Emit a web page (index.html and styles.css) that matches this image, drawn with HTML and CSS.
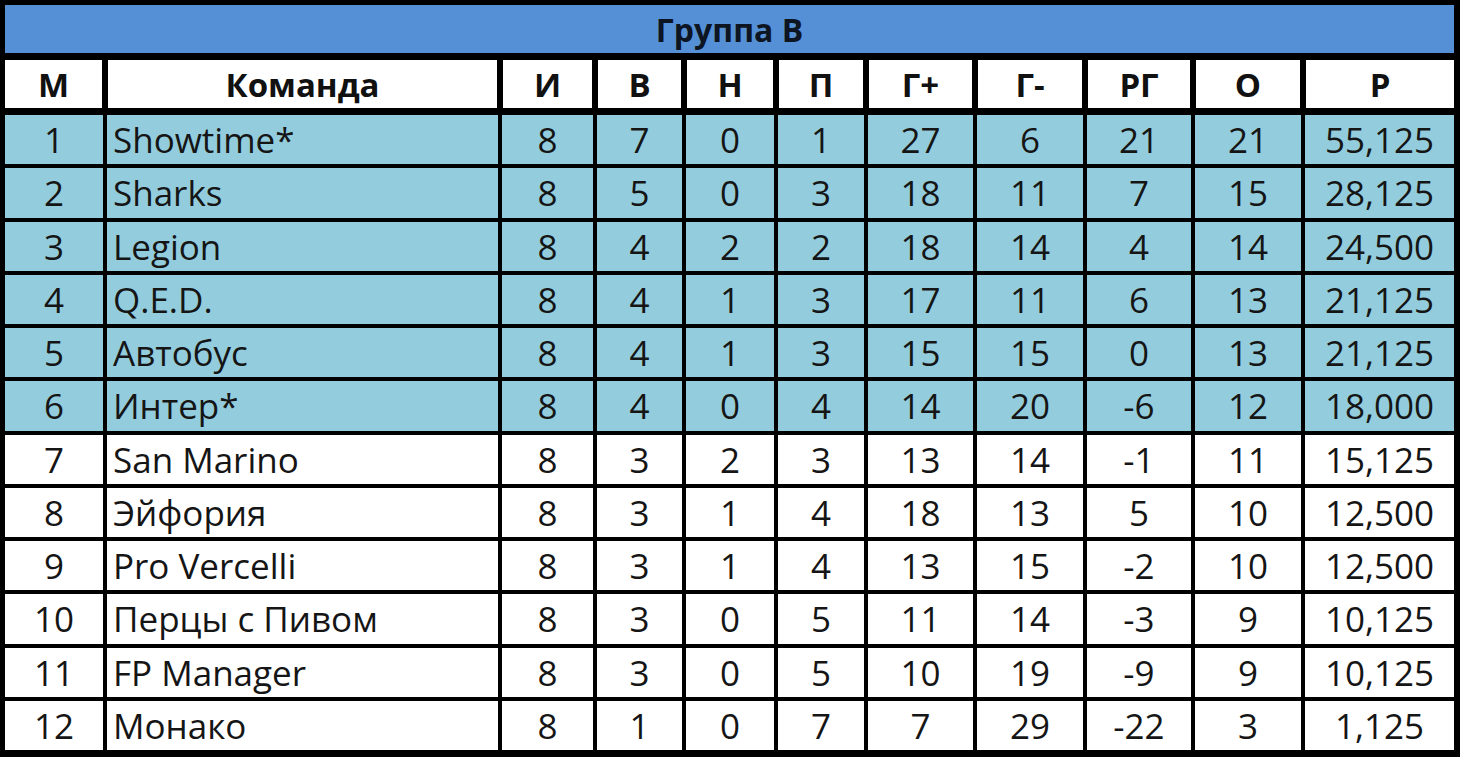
FILE: index.html
```html
<!DOCTYPE html>
<html lang="ru">
<head>
<meta charset="utf-8">
<title>Группа В</title>
<link rel="stylesheet" href="styles.css">
</head>
<body>
<div class="sheet">
  <div class="title">Группа В</div>
  <div class="grid">
    <div class="hd first">М</div>
    <div class="hd">Команда</div>
    <div class="hd">И</div>
    <div class="hd">В</div>
    <div class="hd">Н</div>
    <div class="hd">П</div>
    <div class="hd">Г+</div>
    <div class="hd">Г-</div>
    <div class="hd">РГ</div>
    <div class="hd">О</div>
    <div class="hd last">Р</div>

    <div class="c q">1</div><div class="c q team">Showtime*</div><div class="c q">8</div><div class="c q">7</div><div class="c q">0</div><div class="c q">1</div><div class="c q">27</div><div class="c q">6</div><div class="c q">21</div><div class="c q">21</div><div class="c q">55,125</div>
    <div class="c q">2</div><div class="c q team">Sharks</div><div class="c q">8</div><div class="c q">5</div><div class="c q">0</div><div class="c q">3</div><div class="c q">18</div><div class="c q">11</div><div class="c q">7</div><div class="c q">15</div><div class="c q">28,125</div>
    <div class="c q">3</div><div class="c q team">Legion</div><div class="c q">8</div><div class="c q">4</div><div class="c q">2</div><div class="c q">2</div><div class="c q">18</div><div class="c q">14</div><div class="c q">4</div><div class="c q">14</div><div class="c q">24,500</div>
    <div class="c q">4</div><div class="c q team">Q.E.D.</div><div class="c q">8</div><div class="c q">4</div><div class="c q">1</div><div class="c q">3</div><div class="c q">17</div><div class="c q">11</div><div class="c q">6</div><div class="c q">13</div><div class="c q">21,125</div>
    <div class="c q">5</div><div class="c q team">Автобус</div><div class="c q">8</div><div class="c q">4</div><div class="c q">1</div><div class="c q">3</div><div class="c q">15</div><div class="c q">15</div><div class="c q">0</div><div class="c q">13</div><div class="c q">21,125</div>
    <div class="c q">6</div><div class="c q team">Интер*</div><div class="c q">8</div><div class="c q">4</div><div class="c q">0</div><div class="c q">4</div><div class="c q">14</div><div class="c q">20</div><div class="c q">-6</div><div class="c q">12</div><div class="c q">18,000</div>
    <div class="c">7</div><div class="c team">San Marino</div><div class="c">8</div><div class="c">3</div><div class="c">2</div><div class="c">3</div><div class="c">13</div><div class="c">14</div><div class="c">-1</div><div class="c">11</div><div class="c">15,125</div>
    <div class="c">8</div><div class="c team">Эйфория</div><div class="c">8</div><div class="c">3</div><div class="c">1</div><div class="c">4</div><div class="c">18</div><div class="c">13</div><div class="c">5</div><div class="c">10</div><div class="c">12,500</div>
    <div class="c">9</div><div class="c team">Pro Vercelli</div><div class="c">8</div><div class="c">3</div><div class="c">1</div><div class="c">4</div><div class="c">13</div><div class="c">15</div><div class="c">-2</div><div class="c">10</div><div class="c">12,500</div>
    <div class="c">10</div><div class="c team">Перцы с Пивом</div><div class="c">8</div><div class="c">3</div><div class="c">0</div><div class="c">5</div><div class="c">11</div><div class="c">14</div><div class="c">-3</div><div class="c">9</div><div class="c">10,125</div>
    <div class="c">11</div><div class="c team">FP Manager</div><div class="c">8</div><div class="c">3</div><div class="c">0</div><div class="c">5</div><div class="c">10</div><div class="c">19</div><div class="c">-9</div><div class="c">9</div><div class="c">10,125</div>
    <div class="c">12</div><div class="c team">Монако</div><div class="c">8</div><div class="c">1</div><div class="c">0</div><div class="c">7</div><div class="c">7</div><div class="c">29</div><div class="c">-22</div><div class="c">3</div><div class="c">1,125</div>
  </div>
</div>
</body>
</html>
```

FILE: styles.css
```css
html, body {
  margin: 0;
  padding: 0;
  background: #000;
}

body {
  width: 1460px;
  height: 757px;
  overflow: hidden;
  font-family: "Open Sans", "Noto Sans", sans-serif;
  color: #151515;
}

.sheet {
  display: flex;
  flex-direction: column;
  gap: 7px;
  padding: 5px 6px 0 5px;
}

.title {
  height: 48px;
  background: #5590d6;
  color: #0d1422;
  font-weight: 700;
  font-size: 32px;
  display: flex;
  align-items: center;
  justify-content: center;
}

.grid {
  display: grid;
  grid-template-columns: 98px 391px 91px 85px 88px 86px 105px 106px 104px 106px 149px;
  grid-template-rows: 51px repeat(12, 49.25px);
  column-gap: 4px;
  row-gap: 4px;
}

.hd {
  background: #fff;
  font-weight: 700;
  font-size: 33px;
  color: #111;
  display: flex;
  align-items: center;
  justify-content: center;
  margin: 0 -1px 3px -1px;
  border-left: 2px solid #000;
  border-right: 2px solid #000;
}

.hd.first {
  border-left: 0;
  margin-left: 0;
}

.hd.last {
  border-right: 0;
  margin-right: 0;
}

.c {
  background: #fff;
  font-size: 35px;
  display: flex;
  align-items: center;
  justify-content: center;
  white-space: nowrap;
}

.c.q {
  background: #93cddd;
}

.c.team {
  justify-content: flex-start;
  padding-left: 6px;
}
```
